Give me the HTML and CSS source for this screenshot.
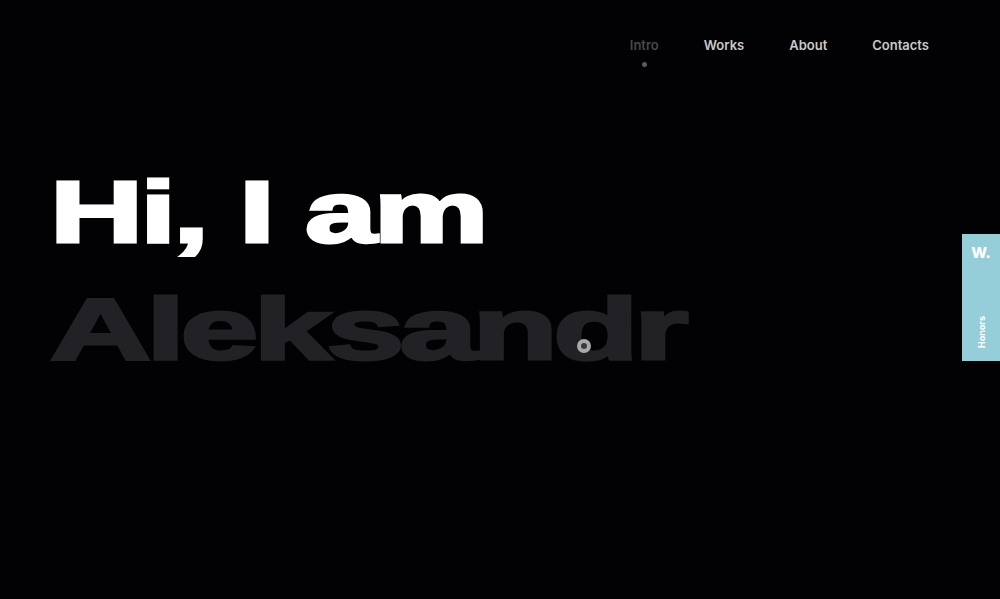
FILE: index.html
```html
<!DOCTYPE html>
<html>
<head>
<meta charset="utf-8">
<link rel="stylesheet" href="styles.css">
</head>
<body>
<div class="page">
  <nav class="nav">
    <a class="nav-item active">Intro<span class="dot"></span></a>
    <a class="nav-item">Works</a>
    <a class="nav-item">About</a>
    <a class="nav-item">Contacts</a>
  </nav>
  <main class="hero">
    <h1 class="line line-hi"><span>Hi, I am</span></h1>
    <h2 class="line line-name"><span>Aleksandr</span></h2>
  </main>
  <aside class="honors">
    <span class="w">W.</span>
    <span class="label">Honors</span>
  </aside>
  <div class="cursor"></div>
</div>
</body>
</html>
```
FILE: styles.css
```css
html, body {
  margin: 0;
  padding: 0;
  background: #020103;
  overflow: hidden;
}
.page {
  position: relative;
  width: 1000px;
  height: 599px;
  background: #020103;
  font-family: "Liberation Sans", Arial, sans-serif;
}
.nav {
  display: flex;
  justify-content: flex-end;
  padding: 37px 71px 0 0;
  font-family: Inter, "Open Sans", sans-serif;
  font-weight: 600;
  font-size: 13px;
  color: #c9c9c9;
}
.nav-item {
  position: relative;
  margin-left: 45px;
  line-height: 16px;
}
.nav-item.active {
  color: #48474b;
}
.dot {
  position: absolute;
  left: 50%;
  top: 25px;
  width: 5px;
  height: 5px;
  margin-left: -2.5px;
  border-radius: 50%;
  background: #5b5a5e;
}
.hero {
  padding: 100px 0 0 50px;
}
.line {
  margin: 0;
  font-weight: 700;
  font-size: 88px;
  line-height: 117px;
  white-space: nowrap;
}
.line span {
  display: inline-block;
  transform-origin: left center;
  -webkit-text-stroke: 3px currentColor;
}
.line-hi {
  color: #ffffff;
}
.line-hi span {
  letter-spacing: -2px;
  transform: scaleX(1.467);
}
.line-name {
  color: #222125;
}
.line-name span {
  letter-spacing: -3px;
  transform: scaleX(1.59);
}
.honors {
  position: absolute;
  right: 0;
  top: 234px;
  width: 38px;
  height: 127px;
  background: #95ced9;
  display: flex;
  flex-direction: column;
  align-items: center;
  justify-content: space-between;
  color: #ffffff;
  font-family: Inter, "Open Sans", sans-serif;
  font-weight: 700;
}
.w {
  margin-top: 9px;
  font-size: 15px;
  font-weight: 800;
}
.label {
  font-size: 9px;
  writing-mode: vertical-rl;
  transform: rotate(180deg);
  margin-bottom: 13px;
}
.cursor {
  position: absolute;
  left: 577px;
  top: 339px;
  width: 6px;
  height: 6px;
  border: 4px solid #a9a8aa;
  border-radius: 50%;
  background: #3a393c;
}
```
